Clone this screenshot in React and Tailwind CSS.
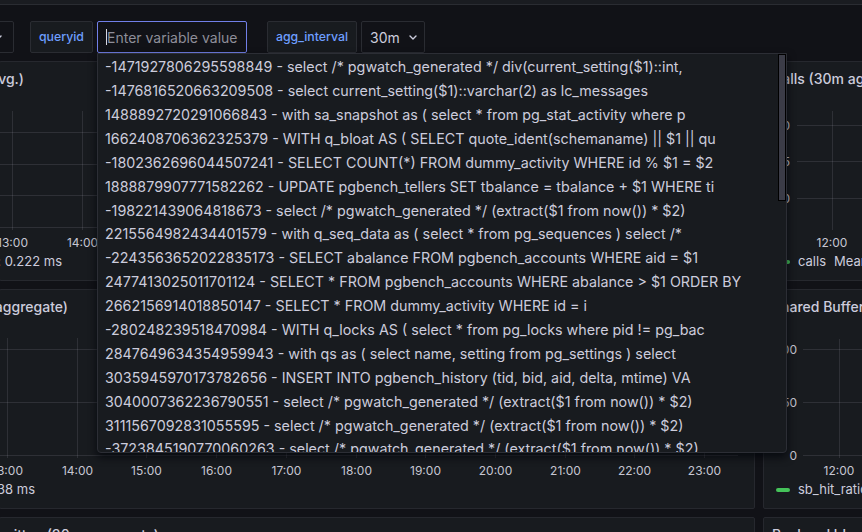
import React from "react";

const items = [
  "-1471927806295598849 - select /* pgwatch_generated */ div(current_setting($1)::int,",
  "-1476816520663209508 - select current_setting($1)::varchar(2) as lc_messages",
  "1488892720291066843 - with sa_snapshot as ( select * from pg_stat_activity where p",
  "1662408706362325379 - WITH q_bloat AS ( SELECT quote_ident(schemaname) || $1 || qu",
  "-1802362696044507241 - SELECT COUNT(*) FROM dummy_activity WHERE id % $1 = $2",
  "1888879907771582262 - UPDATE pgbench_tellers SET tbalance = tbalance + $1 WHERE ti",
  "-198221439064818673 - select /* pgwatch_generated */ (extract($1 from now()) * $2)",
  "2215564982434401579 - with q_seq_data as ( select * from pg_sequences ) select /*",
  "-2243563652022835173 - SELECT abalance FROM pgbench_accounts WHERE aid = $1",
  "2477413025011701124 - SELECT * FROM pgbench_accounts WHERE abalance > $1 ORDER BY",
  "2662156914018850147 - SELECT * FROM dummy_activity WHERE id = i",
  "-280248239518470984 - WITH q_locks AS ( select * from pg_locks where pid != pg_bac",
  "2847649634354959943 - with qs as ( select name, setting from pg_settings ) select",
  "3035945970173782656 - INSERT INTO pgbench_history (tid, bid, aid, delta, mtime) VA",
  "3040007362236790551 - select /* pgwatch_generated */ (extract($1 from now()) * $2)",
  "3111567092831055595 - select /* pgwatch_generated */ (extract($1 from now()) * $2)",
  "-3723845190770060263 - select /* pgwatch_generated */ (extract($1 from now()) * $2)",
];

const hours = ["13:00", "14:00", "15:00", "16:00", "17:00", "18:00", "19:00", "20:00", "21:00", "22:00", "23:00"];

function Chevron() {
  return (
    <svg width="8" height="5" viewBox="0 0 8 5" className="shrink-0">
      <path d="M1 1 L4 4 L7 1" fill="none" stroke="#ccccdc" strokeWidth="1.4" strokeLinecap="round" strokeLinejoin="round" />
    </svg>
  );
}

function EndText({ w, children, className = "" }) {
  return (
    <div className={`flex justify-end whitespace-nowrap ${className}`} style={{ width: w }}>
      <span className="shrink-0">{children}</span>
    </div>
  );
}

const grid = "rgba(204,204,220,0.12)";
const label = "#c6c6d2";

function WideChart({ hl, x0, vTop, vBot, lineEnd }) {
  return (
    <svg width="754" height="156" className="block shrink-0">
      {hl.map((y) => (
        <line key={y} x1="0" x2={lineEnd} y1={y} y2={y} stroke={grid} strokeWidth="1" />
      ))}
      {hours.map((h, i) => {
        const x = Math.round(x0 + i * 69.7) + 0.5;
        return (
          <g key={h}>
            <line x1={x} x2={x} y1={vTop} y2={vBot} stroke={grid} strokeWidth="1" />
            <text x={x} y="148" textAnchor="middle" dominantBaseline="central" fontSize="12" fill={label} fontFamily="Inter, sans-serif">
              {h}
            </text>
          </g>
        );
      })}
    </svg>
  );
}

function SmallChart({ labels, hl, labelX, gx, vx }) {
  return (
    <svg width="140" height="156" className="block shrink-0">
      {hl.map((y, i) => (
        <g key={y}>
          <line x1={gx} x2="140" y1={y + 0.5} y2={y + 0.5} stroke={grid} strokeWidth="1" />
          <text x={labelX} y={y} textAnchor="end" dominantBaseline="central" fontSize="12" fill={label} fontFamily="Inter, sans-serif">
            {labels[i]}
          </text>
        </g>
      ))}
      <line x1={vx + 0.5} x2={vx + 0.5} y1="17" y2="136" stroke={grid} strokeWidth="1" />
      <text x={vx} y="148" textAnchor="middle" dominantBaseline="central" fontSize="12" fill={label} fontFamily="Inter, sans-serif">
        12:00
      </text>
    </svg>
  );
}

function Panel({ className, children }) {
  return (
    <div className={`shrink-0 h-[220px] bg-[#181b1f] border border-[#26282e] rounded-[2px] overflow-hidden flex flex-col ${className}`}>
      {children}
    </div>
  );
}

function Title({ children }) {
  return <div className="h-[32px] shrink-0 flex items-center text-[14px] font-medium text-[#ccccdc] whitespace-nowrap">{children}</div>;
}

function Dropdown() {
  return (
    <div className="absolute top-full left-0 w-[690px] h-[400px] bg-[#181b1f] border border-[#2c2e35] rounded-b-[4px] shadow-[0_4px_8px_rgba(1,4,9,0.75)] overflow-hidden z-20">
      <div className="pt-[1px]">
        {items.map((t) => (
          <div key={t} className="h-[23.9px] flex items-center pl-[7px] text-[14.3px] text-[#ccccdc] whitespace-nowrap">
            {t}
          </div>
        ))}
      </div>
      <div className="absolute right-0 top-0 w-[8px] h-[147px] bg-[#3b3c47] border border-black" />
    </div>
  );
}

function VarsRow() {
  return (
    <div className="mt-[16px] h-[32px] flex items-stretch relative z-10 text-[14px]">
      <div className="shrink-0 w-[60px] -ml-[46px] border border-[#2a2c32] rounded-[2px] flex items-center justify-end pr-[11px]">
        <Chevron />
      </div>
      <div className="shrink-0 ml-[16px] w-[63px] bg-[#181b1f] border border-[#2a2c32] rounded-[2px] flex items-center justify-center text-[#6e9fff] font-medium text-[12.3px]">
        queryid
      </div>
      <div className="shrink-0 ml-[4px] w-[150px] relative">
        <div className="h-full border border-[#717fe8] rounded-[2px] bg-[#111217] flex items-center pl-[8px]">
          <span className="w-[1px] h-[16px] bg-[#d8d8e0] shrink-0" />
          <span className="text-[#8e8e99] whitespace-nowrap">Enter variable value</span>
        </div>
        <Dropdown />
      </div>
      <div className="shrink-0 ml-[20px] w-[90px] bg-[#181b1f] border border-[#2a2c32] rounded-[2px] flex items-center justify-center text-[#6e9fff] font-medium text-[12.3px]">
        agg_interval
      </div>
      <div className="shrink-0 ml-[4px] w-[64px] border border-[#2a2c32] rounded-[2px] flex items-center pl-[8px] gap-[9px] text-[#ccccdc]">
        <span>30m</span>
        <Chevron />
      </div>
    </div>
  );
}

function Legend({ children }) {
  return <div className="h-[24px] shrink-0 flex items-center text-[13px] text-[#ccccdc] whitespace-nowrap">{children}</div>;
}

export default function App() {
  return (
    <div className="w-[862px] h-[532px] overflow-hidden bg-[#111217] font-[Inter,sans-serif] text-[#ccccdc]">
      <div className="h-[5px] bg-[#1a1c21] border-b border-[#2a2c32]" />
      <VarsRow />
      <div className="mt-[8px] flex flex-col gap-[8px]">
        <div className="flex gap-[8px] -ml-[1px]">
          <Panel className="w-[756px]">
            <Title>
              <EndText w={24}>Query runtime per call (avg.)</EndText>
            </Title>
            <WideChart hl={[38.5, 70.5, 101.5, 133.5]} x0={12} vTop={17} vBot={136} lineEnd={738} />
            <Legend>
              <EndText w={62}>calls&nbsp;&nbsp;Mean: 0.222 ms</EndText>
            </Legend>
          </Panel>
          <Panel className="w-[200px]">
            <Title>
              <span className="pl-[8px]">Calls (30m aggregate)</span>
            </Title>
            <SmallChart labels={["20", "15", "10"]} hl={[31, 67, 104]} labelX={26} gx={33} vx={68} />
            <Legend>
              <span className="ml-[12px] w-[14px] h-[4px] rounded-full bg-[#45c35a]" />
              <span className="ml-[8px]">calls</span>
              <span className="ml-[8px]">Mean: 0.222 ms</span>
            </Legend>
          </Panel>
        </div>
        <div className="flex gap-[8px] -ml-[1px]">
          <Panel className="w-[756px]">
            <Title>
              <EndText w={68}>Query runtime per call (30m aggregate)</EndText>
            </Title>
            <WideChart hl={[27.5, 80.5, 133.5]} x0={7} vTop={16} vBot={136} lineEnd={738} />
            <Legend>
              <EndText w={35}>calls&nbsp;&nbsp;Mean: 0.338 ms</EndText>
            </Legend>
          </Panel>
          <Panel className="w-[200px]">
            <Title>
              <span className="pl-[8px]">Shared Buffers hit ratio</span>
            </Title>
            <SmallChart labels={["100", "50", "0"]} hl={[27, 80, 133]} labelX={33} gx={39} vx={75} />
            <Legend>
              <span className="ml-[12px] w-[14px] h-[4px] rounded-full bg-[#45c35a]" />
              <span className="ml-[8px]">sb_hit_ratio</span>
            </Legend>
          </Panel>
        </div>
        <div className="flex gap-[8px] -ml-[1px]">
          <Panel className="w-[756px]">
            <Title>
              <EndText w={159}>Blocks written (30m aggregate)</EndText>
            </Title>
          </Panel>
          <Panel className="w-[200px]">
            <Title>
              <span className="pl-[8px]">Backend blocks read</span>
            </Title>
          </Panel>
        </div>
      </div>
    </div>
  );
}
